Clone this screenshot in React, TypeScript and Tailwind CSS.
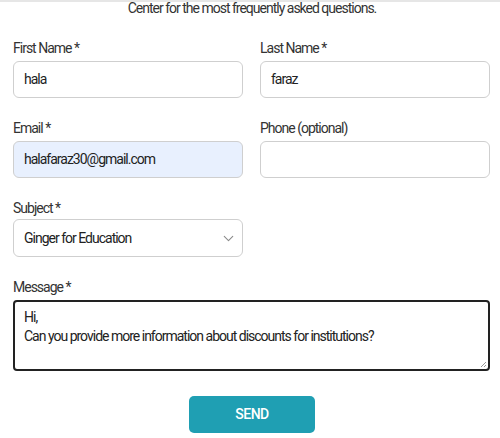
import React from "react";

function Label({ children, mb = "mb-[5px]" }: { children: React.ReactNode; mb?: string }) {
  return <div className={`h-4 leading-4 text-[14px] text-[#333] ${mb}`}>{children}</div>;
}

function Field({ label, value, bg }: { label: string; value: string; bg?: boolean }) {
  return (
    <div className="flex flex-col">
      <Label>{label}</Label>
      <div
        className={`h-[37px] rounded-[6px] border border-[#cfcfcf] flex items-center px-[10px] text-[14px] text-[#222] ${
          bg ? "bg-[#e8f0fe]" : "bg-white"
        }`}
      >
        {value}
      </div>
    </div>
  );
}

export default function App() {
  return (
    <div
      className="w-[500px] h-[438px] bg-white tracking-[-1px]"
      style={{ fontFamily: "Roboto, 'Liberation Sans', sans-serif" }}
    >
      <div className="h-[2px] bg-[#e6e6e6]" />
      <div className="text-center text-[14px] leading-[12px] text-[#333] pl-[4px]">
        Center for the most frequently asked questions.
      </div>
      <div className="pl-[13px] pr-[10px] pt-[26px]">
        <div className="grid grid-cols-2 gap-x-[17px] gap-y-[22px]">
          <Field label="First Name *" value="hala" />
          <Field label="Last Name *" value="faraz" />
          <Field label="Email *" value="halafaraz30@gmail.com" bg />
          <Field label="Phone (optional)" value="" />
          <div className="flex flex-col">
            <Label mb="mb-[3px]">Subject *</Label>
            <div className="h-[38px] rounded-[6px] border border-[#cfcfcf] flex items-center justify-between pl-[10px] pr-[5px] text-[14px] text-[#222]">
              <span>Ginger for Education</span>
              <svg width="17" height="17" viewBox="0 0 24 24" fill="none" stroke="#8a8a8a" strokeWidth="1.5" strokeLinecap="round" strokeLinejoin="round">
                <path d="m6 9 6 6 6-6" />
              </svg>
            </div>
          </div>
          <div />
          <div className="col-span-2 flex flex-col">
            <Label>Message *</Label>
            <div className="relative h-[71px] rounded-[4px] border-2 border-[#222] px-[9px] pt-[6px] text-[14px] leading-[19px] text-[#222]">
              <div>Hi,</div>
              <div>Can you provide more information about discounts for institutions?</div>
              <svg className="absolute right-[1px] bottom-[1px]" width="7" height="7" viewBox="0 0 7 7">
                <path d="M6 1 L1 6 M6 4 L4 6" stroke="#999" strokeWidth="1" />
              </svg>
            </div>
          </div>
        </div>
        <div className="flex justify-center mt-[25px]">
          <button className="w-[126px] h-[37px] rounded-[5px] bg-[#1f9fb3] text-white text-[14px] font-medium ml-[1px] tracking-[-0.5px]">
            SEND
          </button>
        </div>
      </div>
    </div>
  );
}
